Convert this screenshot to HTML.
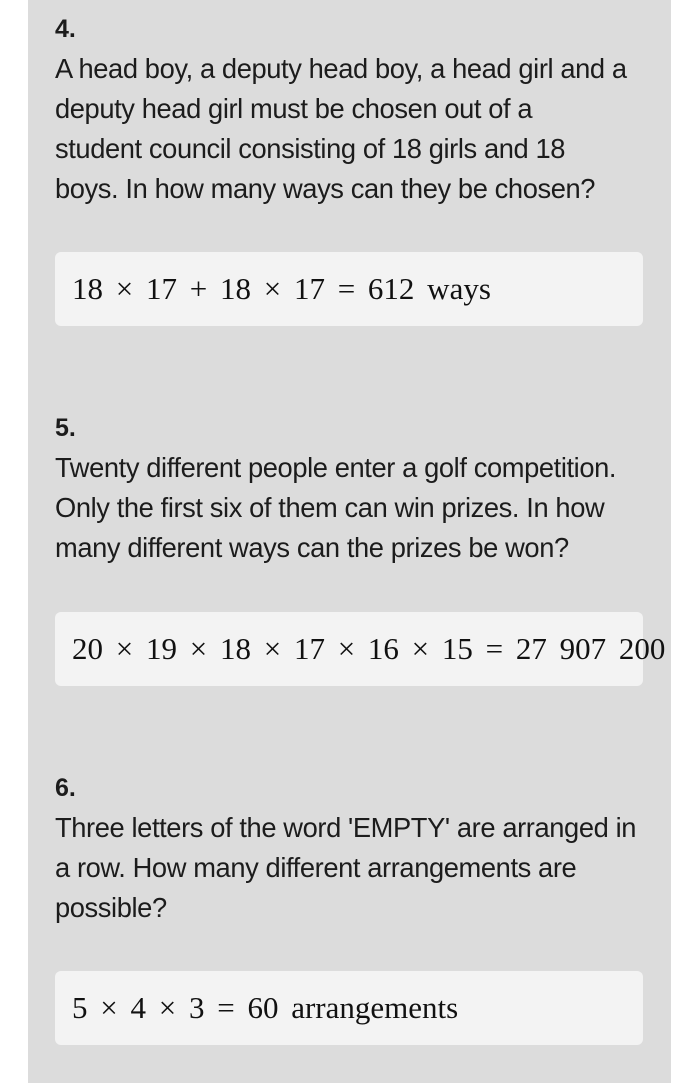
<!DOCTYPE html>
<html><head><style>
body{margin:0;background:#fff;width:689px;height:1083px;overflow:hidden;font-family:"Liberation Sans",sans-serif;color:#1c1c1c}
.panel{position:absolute;left:28px;top:0;width:643px;height:1083px;background:#dcdcdc}
.sec{position:absolute;left:55px;width:640px;white-space:nowrap}
.h{font-weight:bold;font-size:25px;line-height:40px}
.t{font-size:27.3px;line-height:40px;letter-spacing:-0.4px}
.box{position:absolute;left:55px;width:588px;height:74px;background:#f3f3f3;border-radius:6px;font-family:"Liberation Serif",serif;font-size:31px;line-height:74px;padding-left:17px;box-sizing:border-box;white-space:nowrap;color:#111;word-spacing:5px}
</style></head><body>
<div class="panel"></div>
<div class="sec" style="top:9px"><div class="h">4.</div><div class="t">A head boy, a deputy head boy, a head girl and a<br>deputy head girl must be chosen out of a<br>student council consisting of 18 girls and 18<br>boys. In how many ways can they be chosen?</div></div>
<div class="box" style="top:252px">18 × 17 + 18 × 17 = 612 ways</div>
<div class="sec" style="top:408px"><div class="h">5.</div><div class="t">Twenty different people enter a golf competition.<br>Only the first six of them can win prizes. In how<br>many different ways can the prizes be won?</div></div>
<div class="box" style="top:612px;overflow:visible">20 × 19 × 18 × 17 × 16 × 15 = 27 907 200</div>
<div class="sec" style="top:768px"><div class="h">6.</div><div class="t">Three letters of the word 'EMPTY' are arranged in<br>a row. How many different arrangements are<br>possible?</div></div>
<div class="box" style="top:971px">5 × 4 × 3 = 60 arrangements</div>
</body></html>
